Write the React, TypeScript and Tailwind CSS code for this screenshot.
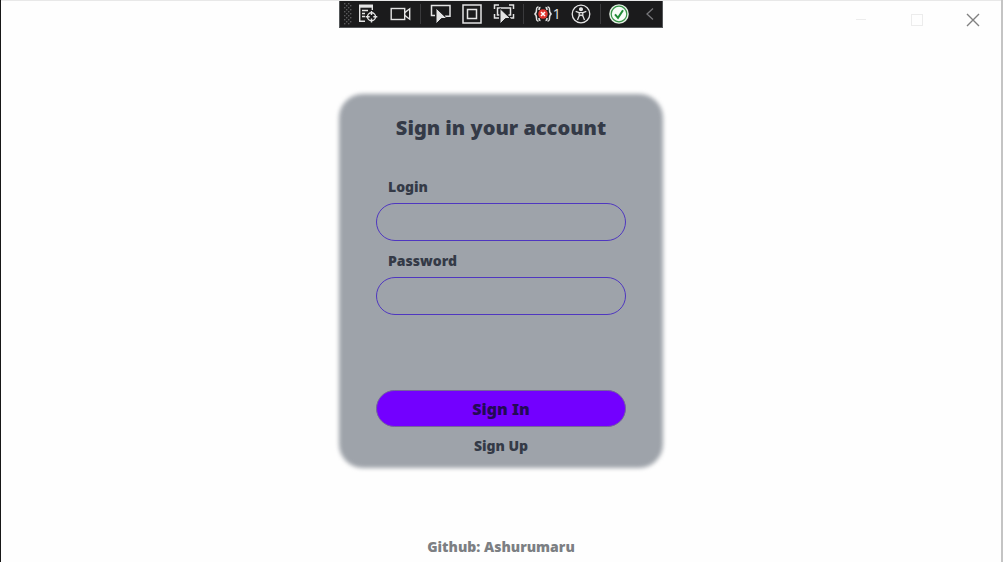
import type { ReactNode } from "react";

function ToolButton({ label, children }: { label: string; children: ReactNode }) {
  return (
    <button type="button" aria-label={label} className="flex h-6 items-center justify-center">
      {children}
    </button>
  );
}

function Divider() {
  return <span className="-mx-0.5 h-5 w-px bg-[#3a3a3c]" />;
}

function DebugToolbar() {
  return (
    <div
      role="toolbar"
      aria-label="Debug tools"
      className="flex h-[27px] w-[324px] items-center border border-t-0 border-[#55585a] bg-[#1b1b1c] pl-1 pr-1 text-[#e4e4e4]"
    >
      <svg width="8" height="22" viewBox="0 0 8 22" fill="#5a5a5c" className="mr-1.5">
        {[0, 4, 8, 12, 16, 20].map((y) => (
          <g key={y}>
            <rect x="0" y={y} width="1.4" height="1.4" />
            <rect x="4" y={y} width="1.4" height="1.4" />
            <rect x="2" y={y + 2} width="1.4" height="1.4" />
            <rect x="6" y={y + 2} width="1.4" height="1.4" />
          </g>
        ))}
      </svg>
      <div className="flex flex-1 items-center justify-between">
        <ToolButton label="Go to live visual tree">
          <svg width="21" height="22" viewBox="0 0 21 22" fill="none" stroke="currentColor" strokeWidth="1.4">
            <path d="M7 18.3H1.7V2.5h12.6V7" />
            <path d="M1 3.2h14" strokeWidth="3" />
            <path d="M4 7.5h6M4 10.5h3M4 13.5h3" />
            <circle cx="13.5" cy="13.8" r="4" />
            <path d="M13.5 8v4M13.5 15.6v4M7.7 13.8h4M15.3 13.8h4" />
          </svg>
        </ToolButton>
        <ToolButton label="Record">
          <svg width="22" height="16" viewBox="0 0 22 16" fill="none" stroke="currentColor" strokeWidth="1.4">
            <rect x="1.2" y="2.5" width="13.5" height="11" />
            <path d="M14.7 6.6l5-3.8v10.4l-5-3.8" />
          </svg>
        </ToolButton>
        <Divider />
        <ToolButton label="Select element">
          <svg width="22" height="22" viewBox="0 0 22 22" fill="none" stroke="currentColor" strokeWidth="1.5">
            <path d="M5 12.5H1.5V2.5h18.500v10.800h-5" />
            <path d="M6 5l11 10.500h-5.500L6 21z" fill="currentColor" stroke="#1b1b1c" strokeWidth="1" />
          </svg>
        </ToolButton>
        <ToolButton label="Display layout adorners">
          <svg width="20" height="20" viewBox="0 0 20 20" fill="none" stroke="currentColor" strokeWidth="1.5">
            <rect x="1" y="1" width="18" height="18" />
            <rect x="5.5" y="5.5" width="9" height="9" />
          </svg>
        </ToolButton>
        <ToolButton label="Track focused element">
          <svg width="22" height="22" viewBox="0 0 22 22" fill="none" stroke="currentColor" strokeWidth="1.5">
            <path d="M1.5 6V2H6M16 2h4.5v4M1.5 11v4H6M20.5 11v4H17" />
            <path d="M6.5 12H4.500V5h13v7h-2" />
            <path d="M7 5.500l10.500 10h-5L7 21z" fill="currentColor" stroke="#1b1b1c" strokeWidth="1" />
          </svg>
        </ToolButton>
        <Divider />
        <ToolButton label="Binding failures">
          <svg width="20" height="18" viewBox="0 0 20 18" fill="none" stroke="currentColor" strokeWidth="1.5">
            <path d="M5.5 2C3.5 2 3.5 3 3.5 5s0 3.500-2 4c2 .5 2 2 2 4s0 3 2 3M14.500 2c2 0 2 1 2 3s0 3.500 2 4c-2 .5-2 2-2 4s0 3-2 3" />
            <path d="M7.500 2.500C6 2.500 6 4 6 5M12.500 2.500C14 2.500 14 4 14 5M7.500 15.500C6 15.500 6 14 6 13M12.500 15.500c1.500 0 1.500-1.500 1.500-2.500" />
            <circle cx="10" cy="9" r="4.8" fill="#e0352f" stroke="none" />
            <path d="M8 7l4 4M12 7l-4 4" stroke="#fff" />
          </svg>
          <span className="font-['Open_Sans','Noto_Sans',sans-serif] text-sm font-normal">1</span>
        </ToolButton>
        <ToolButton label="Accessibility checker">
          <svg width="20" height="20" viewBox="0 0 20 20" fill="none" stroke="currentColor" strokeWidth="1.3">
            <circle cx="10" cy="10" r="8.8" />
            <circle cx="10" cy="5.2" r="1.4" fill="currentColor" />
            <path d="M4.7 7.3l3.500 1.400v3L6.500 16M15.300 7.300l-3.500 1.400v3l1.700 4.300M8.200 8.700h3.600M8.200 12L10 11l1.800 1" />
          </svg>
        </ToolButton>
        <Divider />
        <ToolButton label="Hot reload available">
          <svg width="20" height="20" viewBox="0 0 20 20" fill="none">
            <circle cx="10" cy="10" r="9.8" fill="#e6f2e6" />
            <circle cx="10" cy="10" r="7.8" fill="#f7fcf7" stroke="#389447" strokeWidth="1.2" />
            <path d="M6 10.300l3 3.500 5-7.600" stroke="#208b36" strokeWidth="2" />
          </svg>
        </ToolButton>
        <ToolButton label="Collapse toolbar">
          <svg width="18" height="14" viewBox="0 0 18 14" fill="none" stroke="#77777a" strokeWidth="1.3">
            <path d="M13 1.500L7 7l6 5.500" />
          </svg>
        </ToolButton>
      </div>
    </div>
  );
}

function WindowControls() {
  return (
    <div className="flex h-[38px] items-center justify-end gap-10 pr-5">
      <button type="button" aria-label="Minimize">
        <svg width="16" height="16" viewBox="0 0 16 16" stroke="#ececec">
          <path d="M3 7.500h10" />
        </svg>
      </button>
      <button type="button" aria-label="Maximize">
        <svg width="16" height="16" viewBox="0 0 16 16" fill="none" stroke="#ececec">
          <rect x="2.5" y="2.5" width="11" height="11" />
        </svg>
      </button>
      <button type="button" aria-label="Close">
        <svg width="16" height="16" viewBox="0 0 16 16" stroke="#808080" strokeWidth="1.4">
          <path d="M2 2l12 12M14 2L2 14" />
        </svg>
      </button>
    </div>
  );
}

function Field({ id, label, type }: { id: string; label: string; type: string }) {
  return (
    <div className="flex flex-col gap-1.5">
      <label htmlFor={id} className="pl-3 text-sm leading-5">
        {label}
      </label>
      <input
        id={id}
        type={type}
        className="h-[38px] w-full rounded-full border border-[#4f37c0] bg-transparent px-4 text-sm outline-none"
      />
    </div>
  );
}

export default function App() {
  return (
    <div className="flex min-h-screen flex-col border-l border-r-2 border-l-[#171717] border-r-[#c4c4c4] bg-[#fefefe] font-['Noto_Sans','Open_Sans',sans-serif] font-black text-[#343a47]">
      <header className="grid h-10 grid-cols-[1fr_auto_1fr] items-start border-t border-[#e8e8e8]">
        <span />
        <DebugToolbar />
        <WindowControls />
      </header>
      <main className="flex flex-1 flex-col items-center pt-[54px]">
        <form className="relative isolate flex w-[324px] flex-col px-[37px] pt-5 pb-3">
          <span className="absolute inset-0 -z-10 rounded-[24px] bg-[#9ea3aa] blur-[2px]" />
          <h1 className="text-center text-xl leading-7">Sign in your account</h1>
          <div className="mt-[35px] flex flex-col gap-2.5">
            <Field id="login" label="Login" type="text" />
            <Field id="password" label="Password" type="password" />
          </div>
          <button
            type="submit"
            className="mt-[75px] h-[37px] rounded-full border border-[#76639c] bg-[#7300ff] text-base leading-6 text-[#230b55]"
          >
            Sign In
          </button>
          <button type="button" className="mt-[9px] self-center text-sm leading-5">
            Sign Up
          </button>
        </form>
      </main>
      <footer className="pb-[5px] text-center text-sm leading-5 text-[#7c7f83]">Github: Ashurumaru</footer>
    </div>
  );
}
